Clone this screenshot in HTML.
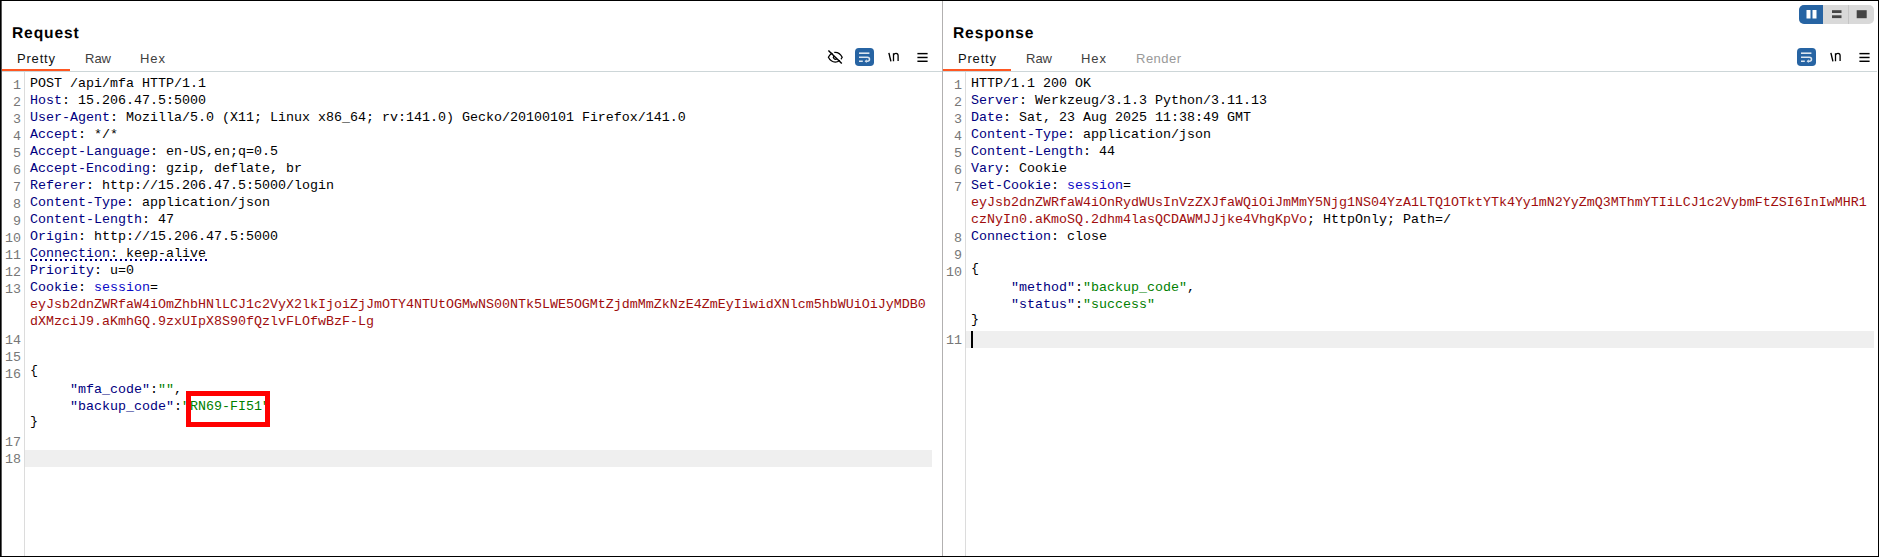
<!DOCTYPE html>
<html><head><meta charset="utf-8">
<style>
*{margin:0;padding:0;box-sizing:border-box}
html,body{width:1879px;height:557px;overflow:hidden;background:#fff}
body{position:relative;font-family:"Liberation Sans",sans-serif;color:#000}
.a{position:absolute}
.title{font-weight:bold;font-size:15.6px;letter-spacing:0.85px;white-space:nowrap;line-height:20px;text-rendering:geometricPrecision}
.tab{font-size:13px;white-space:nowrap;color:#333;line-height:16px}
.hl{height:1px;background:#cdd6d8}
.ul{height:2px;background:#ff5722}
.gut{width:1px;background:#dcdcdc}
.code{font-family:"Liberation Mono",monospace;font-size:13.333px;white-space:pre;line-height:17px;color:#000}
.ln{font-family:"Liberation Mono",monospace;font-size:13.333px;color:#777;text-align:right;line-height:17px;white-space:pre}
.k{color:#000080}
.r{color:#a00d0d}
.g{color:#008000}
.b{color:#0a0ac8}
.br{position:relative;top:-2px}
.cur{background:#efefef;height:17px}
</style></head><body>
<!-- frame -->
<div class="a" style="left:0;top:0;width:1879px;height:1px;background:#000"></div>
<div class="a" style="left:0;top:0;width:1px;height:557px;background:#000"></div>
<div class="a" style="left:1px;top:1px;width:1px;height:555px;background:#5a5a5a"></div>
<div class="a" style="left:1878px;top:0;width:1px;height:557px;background:#000"></div>
<div class="a" style="left:0;top:556px;width:1879px;height:1px;background:#000"></div>

<!-- LEFT PANEL -->
<div class="a title" style="left:12px;top:24px">Request</div>
<div class="a tab" style="left:17px;top:51px;color:#111;letter-spacing:0.8px">Pretty</div>
<div class="a tab" style="left:85px;top:51px;color:#404040">Raw</div>
<div class="a tab" style="left:140px;top:51px;letter-spacing:0.9px;color:#404040">Hex</div>
<div class="a ul" style="left:2px;top:69px;width:68px"></div>
<div class="a hl" style="left:2px;top:71px;width:940px"></div>
<div class="a gut" style="left:24px;top:72px;height:484px"></div>
<div class="a cur" style="left:25px;top:450px;width:907px"></div>

<!-- left icons -->
<svg class="a" style="left:826px;top:48px" width="19" height="18" viewBox="0 0 19 18">
  <path d="M2.4 9.3 C4 6.2 6.5 4.4 9.3 4.4 C12.1 4.4 14.6 6.2 16.2 9.3 C14.6 12.4 12.1 14.1 9.3 14.1 C6.5 14.1 4 12.4 2.4 9.3 Z" fill="none" stroke="#000" stroke-width="1.3"/>
  <path d="M7.92 7.82 A2.1 2.1 0 0 0 10.88 10.78" fill="none" stroke="#000" stroke-width="1.3"/>
  <path d="M3.6 1.1 L17.1 14.5" stroke="#fff" stroke-width="1.7"/>
  <path d="M2.4 2.4 L15.8 15.6" stroke="#000" stroke-width="1.4"/>
</svg>
<svg class="a" style="left:855px;top:48px" width="19" height="18" viewBox="0 0 19 18">
  <rect x="0" y="0" width="19" height="18" rx="3.8" fill="#2764a3"/>
  <rect x="4" y="4.4" width="10.4" height="1.6" fill="#dce6f0"/>
  <path d="M4 9.2 H12.3 C13.6 9.2 14.5 10.1 14.5 11.2 C14.5 12.3 13.6 13.2 12.3 13.2 H11.2" fill="none" stroke="#dce6f0" stroke-width="1.5"/>
  <path d="M11.7 11.3 L9.6 13.2 L11.7 15 Z" fill="#dce6f0"/>
  <rect x="4" y="12.5" width="3.8" height="1.5" fill="#dce6f0"/>
</svg>
<svg class="a" style="left:886px;top:50px" width="14" height="14" viewBox="0 0 14 14">
  <path d="M2.9 2.8 L4.9 11.3" stroke="#000" stroke-width="1.4"/>
  <path d="M7.5 11.3 V3.3 M7.5 5.2 C8 3.9 9 3.3 10 3.3 C11.3 3.3 12.1 4.2 12.1 5.6 V10.9" fill="none" stroke="#000" stroke-width="1.3"/>
</svg>
<svg class="a" style="left:917px;top:52px" width="11" height="11" viewBox="0 0 11 11">
  <rect x="0.4" y="0.9" width="10.2" height="1.45" fill="#000"/>
  <rect x="0.4" y="4.75" width="10.2" height="1.45" fill="#000"/>
  <rect x="0.4" y="8.55" width="10.2" height="1.45" fill="#000"/>
</svg>

<div class="a ln" style="left:1px;top:77px;width:20px">1
2
3
4
5
6
7
8
9
10
11
12
13


14
15
16



17
18</div>
<div class="a code" style="left:30px;top:75px">POST /api/mfa HTTP/1.1
<span class="k">Host</span>: 15.206.47.5:5000
<span class="k">User-Agent</span>: Mozilla/5.0 (X11; Linux x86_64; rv:141.0) Gecko/20100101 Firefox/141.0
<span class="k">Accept</span>: */*
<span class="k">Accept-Language</span>: en-US,en;q=0.5
<span class="k">Accept-Encoding</span>: gzip, deflate, br
<span class="k">Referer</span>: http://15.206.47.5:5000/login
<span class="k">Content-Type</span>: application/json
<span class="k">Content-Length</span>: 47
<span class="k">Origin</span>: http://15.206.47.5:5000
<span class="k">Connection</span>: keep-alive
<span class="k">Priority</span>: u=0
<span class="k">Cookie</span>: <span class="b">session</span>=
<span class="r">eyJsb2dnZWRfaW4iOmZhbHNlLCJ1c2VyX2lkIjoiZjJmOTY4NTUtOGMwNS00NTk5LWE5OGMtZjdmMmZkNzE4ZmEyIiwidXNlcm5hbWUiOiJyMDB0</span>
<span class="r">dXMzciJ9.aKmhGQ.9zxUIpX8S90fQzlvFLOfwBzF-Lg</span>


<span class="br">{</span>
     <span class="k">"mfa_code"</span>:<span class="g">""</span>,
     <span class="k">"backup_code"</span>:<span class="g">"RN69-FI51"</span>
<span class="br">}</span></div>

<div class="a" style="left:186px;top:391px;width:84px;height:36px;border:5px solid #f00"></div>
<div class="a" style="left:30px;top:259px;width:177px;height:2px;background:repeating-linear-gradient(to right,#000080 0 2px,transparent 2px 5px)"></div>
<!-- vertical divider -->
<div class="a" style="left:942px;top:1px;width:1px;height:555px;background:#b2b0b0"></div>

<!-- RIGHT PANEL -->
<div class="a title" style="left:953px;top:24px">Response</div>
<div class="a tab" style="left:958px;top:51px;color:#111;letter-spacing:0.8px">Pretty</div>
<div class="a tab" style="left:1026px;top:51px;color:#404040">Raw</div>
<div class="a tab" style="left:1081px;top:51px;letter-spacing:0.9px;color:#404040">Hex</div>
<div class="a tab" style="left:1136px;top:51px;color:#999;letter-spacing:0.5px">Render</div>
<div class="a ul" style="left:943px;top:69px;width:68px"></div>
<div class="a hl" style="left:943px;top:71px;width:934px"></div>
<div class="a gut" style="left:965px;top:72px;height:484px"></div>
<div class="a cur" style="left:966px;top:331px;width:908px"></div>
<div class="a" style="left:971px;top:331px;width:2px;height:17px;background:#000"></div>

<!-- right icons -->
<svg class="a" style="left:1797px;top:48px" width="19" height="18" viewBox="0 0 19 18">
  <rect x="0" y="0" width="19" height="18" rx="3.8" fill="#2764a3"/>
  <rect x="4" y="4.4" width="10.4" height="1.6" fill="#dce6f0"/>
  <path d="M4 9.2 H12.3 C13.6 9.2 14.5 10.1 14.5 11.2 C14.5 12.3 13.6 13.2 12.3 13.2 H11.2" fill="none" stroke="#dce6f0" stroke-width="1.5"/>
  <path d="M11.7 11.3 L9.6 13.2 L11.7 15 Z" fill="#dce6f0"/>
  <rect x="4" y="12.5" width="3.8" height="1.5" fill="#dce6f0"/>
</svg>
<svg class="a" style="left:1828px;top:50px" width="14" height="14" viewBox="0 0 14 14">
  <path d="M2.9 2.8 L4.9 11.3" stroke="#000" stroke-width="1.4"/>
  <path d="M7.5 11.3 V3.3 M7.5 5.2 C8 3.9 9 3.3 10 3.3 C11.3 3.3 12.1 4.2 12.1 5.6 V10.9" fill="none" stroke="#000" stroke-width="1.3"/>
</svg>
<svg class="a" style="left:1859px;top:52px" width="11" height="11" viewBox="0 0 11 11">
  <rect x="0.4" y="0.9" width="10.2" height="1.45" fill="#000"/>
  <rect x="0.4" y="4.75" width="10.2" height="1.45" fill="#000"/>
  <rect x="0.4" y="8.55" width="10.2" height="1.45" fill="#000"/>
</svg>

<!-- layout buttons -->
<svg class="a" style="left:1799px;top:5px" width="75" height="19" viewBox="0 0 75 19">
  <path d="M5 0 H70 A5 5 0 0 1 75 5 V14 A5 5 0 0 1 70 19 H5 A5 5 0 0 1 0 14 V5 A5 5 0 0 1 5 0 Z" fill="#d9d9d9"/>
  <path d="M5 0 H24 V19 H5 A5 5 0 0 1 0 14 V5 A5 5 0 0 1 5 0 Z" fill="#2764a3"/>
  <rect x="49.2" y="0" width="0.8" height="19" fill="#c0c0c0"/>
  <rect x="7.5" y="5" width="4" height="8.5" fill="#fff"/>
  <rect x="13.5" y="5" width="4" height="8.5" fill="#fff"/>
  <rect x="33" y="5.2" width="9.5" height="2.8" fill="#444"/>
  <rect x="33" y="10.3" width="9.5" height="2.8" fill="#444"/>
  <rect x="57.7" y="5.2" width="10" height="8" fill="#444"/>
</svg>

<div class="a ln" style="left:942px;top:77px;width:20px">1
2
3
4
5
6
7


8
9
10



11</div>
<div class="a code" style="left:971px;top:75px">HTTP/1.1 200 OK
<span class="k">Server</span>: Werkzeug/3.1.3 Python/3.11.13
<span class="k">Date</span>: Sat, 23 Aug 2025 11:38:49 GMT
<span class="k">Content-Type</span>: application/json
<span class="k">Content-Length</span>: 44
<span class="k">Vary</span>: Cookie
<span class="k">Set-Cookie</span>: <span class="b">session</span>=
<span class="r">eyJsb2dnZWRfaW4iOnRydWUsInVzZXJfaWQiOiJmMmY5Njg1NS04YzA1LTQ1OTktYTk4Yy1mN2YyZmQ3MThmYTIiLCJ1c2VybmFtZSI6InIwMHR1</span>
<span class="r">czNyIn0.aKmoSQ.2dhm4lasQCDAWMJJjke4VhgKpVo</span>; HttpOnly; Path=/
<span class="k">Connection</span>: close

<span class="br">{</span>
     <span class="k">"method"</span>:<span class="g">"backup_code"</span>,
     <span class="k">"status"</span>:<span class="g">"success"</span>
<span class="br">}</span></div>

</body></html>
